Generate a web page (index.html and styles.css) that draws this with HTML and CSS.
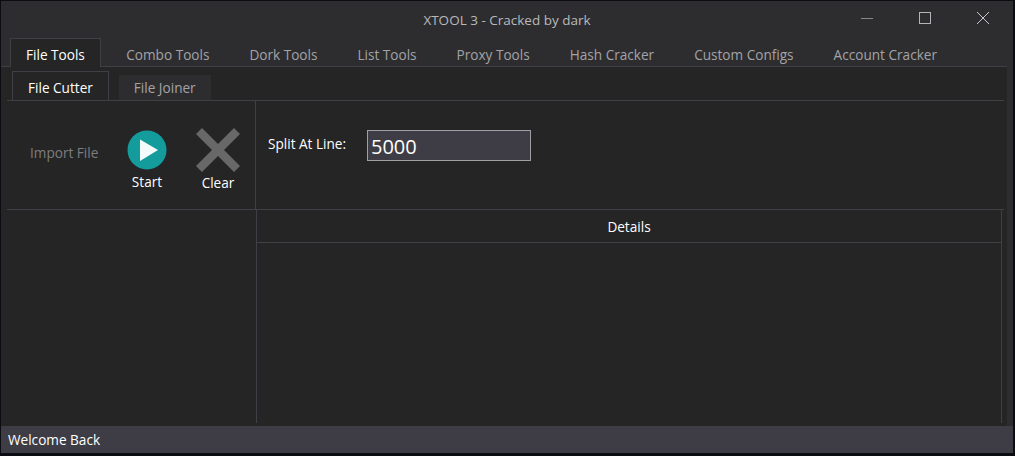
FILE: index.html
```html
<!DOCTYPE html>
<html lang="en">
<head>
<meta charset="utf-8">
<title>XTOOL 3 - Cracked by dark</title>
<link rel="stylesheet" href="styles.css">
</head>
<body>
<div class="window">
  <header class="titlebar">
    <div class="title">XTOOL 3 - Cracked by dark</div>
    <div class="controls">
      <svg class="ctl" width="14" height="14" viewBox="0 0 14 14"><path d="M1 7.5H13" stroke="#85858a" stroke-width="1"/></svg>
      <svg class="ctl" width="14" height="14" viewBox="0 0 14 14"><rect x="1.5" y="1.5" width="11" height="11" fill="none" stroke="#b4b4b8" stroke-width="1"/></svg>
      <svg class="ctl" width="14" height="14" viewBox="0 0 14 14"><path d="M1 1L13 13M13 1L1 13" stroke="#c8c8cc" stroke-width="1"/></svg>
    </div>
  </header>
  <nav class="tabs">
    <div class="tab active">File Tools</div>
    <div class="tab">Combo Tools</div>
    <div class="tab">Dork Tools</div>
    <div class="tab">List Tools</div>
    <div class="tab">Proxy Tools</div>
    <div class="tab">Hash Cracker</div>
    <div class="tab">Custom Configs</div>
    <div class="tab">Account Cracker</div>
  </nav>
  <main class="content">
    <div class="subtabs">
      <div class="subtab active">File Cutter</div>
      <div class="subtab">File Joiner</div>
    </div>
    <div class="top">
      <div class="actions">
        <div class="import">Import File</div>
        <div class="action start">
          <svg width="40" height="40" viewBox="0 0 40 40"><circle cx="20" cy="20" r="19.5" fill="#149c9c"/><path d="M13 9.5L31 20L13 31Z" fill="#f4fbfb"/></svg>
          <span>Start</span>
        </div>
        <div class="action clear">
          <svg width="44" height="44" viewBox="0 0 44 44"><path d="M0 6L6 0L22 16L38 0L44 6L28 22L44 38L38 44L22 28L6 44L0 38L16 22Z" fill="#686868"/></svg>
          <span>Clear</span>
        </div>
      </div>
      <div class="options">
        <label class="split-label">Split At Line:</label>
        <div class="field">5000</div>
      </div>
    </div>
    <div class="bottom">
      <div class="list"></div>
      <div class="details">
        <div class="details-head">Details</div>
      </div>
    </div>
  </main>
  <footer class="status">Welcome Back</footer>
</div>
</body>
</html>
```
FILE: styles.css
```css
* { box-sizing: border-box; }
html, body { margin: 0; height: 100%; }
body {
  background: #0b0d12;
  font-family: "Open Sans", "Noto Sans", sans-serif;
  overflow: hidden;
  padding: 1px 2px 3px 1px;
}
.window {
  height: 452px;
  background: #2d2d30;
  display: flex;
  flex-direction: column;
}
.titlebar {
  height: 37px;
  flex: none;
  display: flex;
  align-items: center;
  justify-content: center;
  position: relative;
}
.title {
  color: #b9b9bb;
  font-size: 13.5px;
  margin-top: 0;
  transform: translateY(0);
}
.controls {
  position: absolute;
  right: 23px;
  top: 10px;
  display: flex;
  gap: 44px;
}
.tabs {
  display: flex;
  height: 29px;
  flex: none;
  padding-left: 9px;
  margin-right: 6px;
  border-bottom: 1px solid #3f3f46;
}
.tab {
  padding: 6px 19.5px 0;
  font-size: 13.6px;
  color: #a3a3a6;
  height: 28px;
  line-height: 21px;
  white-space: nowrap;
}
.tab + .tab { margin-left: 1px; }
.tab.active {
  color: #fff;
  background: #252526;
  border: 1px solid #3f3f46;
  border-bottom: 0;
  height: 29px;
  padding: 5px 15px 0;
  margin-right: 5px;
}
.content {
  flex: 1;
  min-height: 0;
  background: #252526;
  margin-right: 6px;
  display: flex;
  flex-direction: column;
  padding: 5px 3px 3px 6px;
}
.subtabs {
  display: flex;
  height: 29px;
  flex: none;
  align-items: flex-end;
  padding-left: 5px;
  gap: 10px;
  border-bottom: 1px solid #3f3f46;
}
.subtab {
  height: 25px;
  font-size: 13.6px;
  padding: 2px 15px 0;
  line-height: 21px;
  color: #a3a3a6;
  background: #2d2d30;
  white-space: nowrap;
}
.subtab.active {
  height: 29px;
  color: #fff;
  background: #252526;
  border: 1px solid #3f3f46;
  border-bottom: 0;
  padding: 5px 15px 0;
}
.top {
  display: flex;
  height: 109px;
  flex: none;
  border-bottom: 1px solid #3f3f46;
}
.actions {
  width: 249px;
  flex: none;
  border-right: 1px solid #3f3f46;
  position: relative;
  display: flex;
}
.import {
  color: #7d7d7f;
  font-size: 13.6px;
  margin: 42px 0 0 23px;
  width: 97px;
  line-height: 20px;
}
.action {
  display: flex;
  flex-direction: column;
  align-items: center;
  color: #fff;
  font-size: 13.6px;
}
.action span { line-height: 20px; }
.start { width: 40px; padding-top: 29px; gap: 2px; }
.start svg { flex: none; }
.clear { width: 44px; margin-left: 29px; padding-top: 27px; gap: 1px; }
.clear svg { flex: none; }
.options {
  display: flex;
  align-items: flex-start;
  padding: 29px 0 0 12px;
}
.split-label {
  color: #fff;
  font-size: 13.6px;
  line-height: 20px;
  margin-top: 4px;
  width: 99px;
}
.field {
  width: 164px;
  height: 31px;
  background: #3e3d45;
  border: 1px solid #a0a0a4;
  color: #fff;
  font-size: 20px;
  line-height: 31px;
  padding-left: 3px;
}
.bottom {
  flex: 1;
  min-height: 0;
  display: flex;
}
.list { width: 249px; flex: none; }
.details {
  flex: 1;
  min-width: 0;
  margin-right: 2px;
  border-left: 1px solid #3f3f46;
  border-right: 1px solid #3f3f46;
}
.details-head {
  height: 33px;
  color: #fff;
  text-align: center;
  font-size: 13.6px;
  line-height: 33px;
  border-bottom: 1px solid #3f3f46;
}
.status {
  height: 27px;
  flex: none;
  background: #3e3d45;
  color: #fff;
  font-size: 13.6px;
  line-height: 27px;
  padding-left: 7px;
}
```
